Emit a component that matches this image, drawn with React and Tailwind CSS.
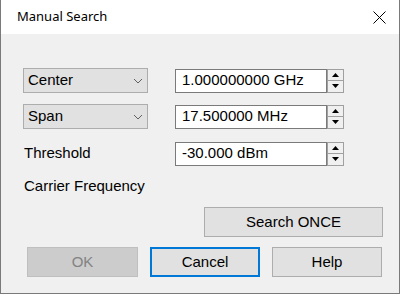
import React from "react";

const F = { fontFamily: '"Liberation Sans", Arial, sans-serif' };

function Chevron() {
  return (
    <svg width="10" height="6" viewBox="0 0 10 6" className="shrink-0">
      <path d="M1 1 L5 5 L9 1" fill="none" stroke="#606060" strokeWidth="1" />
    </svg>
  );
}

function Dropdown({ label }) {
  return (
    <div className="w-[125px] h-[25px] border border-[#adadad] bg-[#e1e1e1] flex items-center justify-between pl-[4px] pr-[4px] text-[15px] text-black">
      <span>{label}</span>
      <Chevron />
    </div>
  );
}

function Spinner() {
  return (
    <div className="w-[17px] h-[24px] border border-[#a0a0a0] bg-[#f0f0f0] flex flex-col">
      <div className="flex-1 border-b border-[#a0a0a0] flex items-center justify-center">
        <svg width="7" height="4" viewBox="0 0 7 4">
          <path d="M0 4 L3.5 0 L7 4 Z" fill="#000" />
        </svg>
      </div>
      <div className="flex-1 flex items-center justify-center">
        <svg width="7" height="4" viewBox="0 0 7 4">
          <path d="M0 0 L3.5 4 L7 0 Z" fill="#000" />
        </svg>
      </div>
    </div>
  );
}

function NumField({ value }) {
  return (
    <div className="flex items-center">
      <div className="w-[152px] h-[24px] border border-[#7a7a7a] bg-white flex items-center pl-[6px] text-[15px] text-black">
        {value}
      </div>
      <Spinner />
    </div>
  );
}

export default function App() {
  return (
    <div style={F} className="w-[400px] h-[295px] bg-white">
      <div className="w-[400px] h-[294px] border-x border-b border-[#7a7a7a] bg-[#f0f0f0] flex flex-col">
        <div className="h-[34px] bg-white flex items-center justify-between pl-[16px] pr-[13px]">
          <span
            style={{ fontFamily: '"Noto Sans", "Open Sans", sans-serif' }}
            className="text-[13px] text-black"
          >
            Manual Search
          </span>
          <svg width="13" height="13" viewBox="0 0 13 13">
            <path d="M0.5 0.5 L12.5 12.5 M12.5 0.5 L0.5 12.5" stroke="#000" strokeWidth="1" />
          </svg>
        </div>

        <div className="flex flex-col pl-[22px] pt-[34px]">
          <div className="h-[25px] flex items-center">
            <Dropdown label="Center" />
            <div className="ml-[27px]">
              <NumField value="1.000000000 GHz" />
            </div>
          </div>
          <div className="h-[25px] mt-[11px] flex items-center">
            <Dropdown label="Span" />
            <div className="ml-[27px]">
              <NumField value="17.500000 MHz" />
            </div>
          </div>
          <div className="h-[25px] mt-[12px] flex items-center">
            <div className="w-[125px] pl-[1px] text-[15px] text-black">Threshold</div>
            <div className="ml-[27px]">
              <NumField value="-30.000 dBm" />
            </div>
          </div>
          <div className="h-[18px] mt-[11px] pl-[1px] flex items-center text-[15px] text-black">
            Carrier Frequency
          </div>
        </div>

        <div className="flex justify-end pr-[16px] mt-[12px]">
          <div className="w-[179px] h-[30px] border border-[#adadad] bg-[#e1e1e1] flex items-center justify-center text-[15px] text-black">
            Search ONCE
          </div>
        </div>

        <div className="flex pl-[26px] mt-[10px] gap-[12px]">
          <div className="w-[111px] h-[30px] border border-[#bfbfbf] bg-[#cccccc] flex items-center justify-center text-[15px] text-[#838383]">
            OK
          </div>
          <div className="w-[110px] h-[30px] border-2 border-[#0078d7] bg-[#e1e1e1] flex items-center justify-center text-[15px] text-black">
            Cancel
          </div>
          <div className="w-[110px] h-[30px] border border-[#adadad] bg-[#e1e1e1] flex items-center justify-center text-[15px] text-black">
            Help
          </div>
        </div>
      </div>
    </div>
  );
}
